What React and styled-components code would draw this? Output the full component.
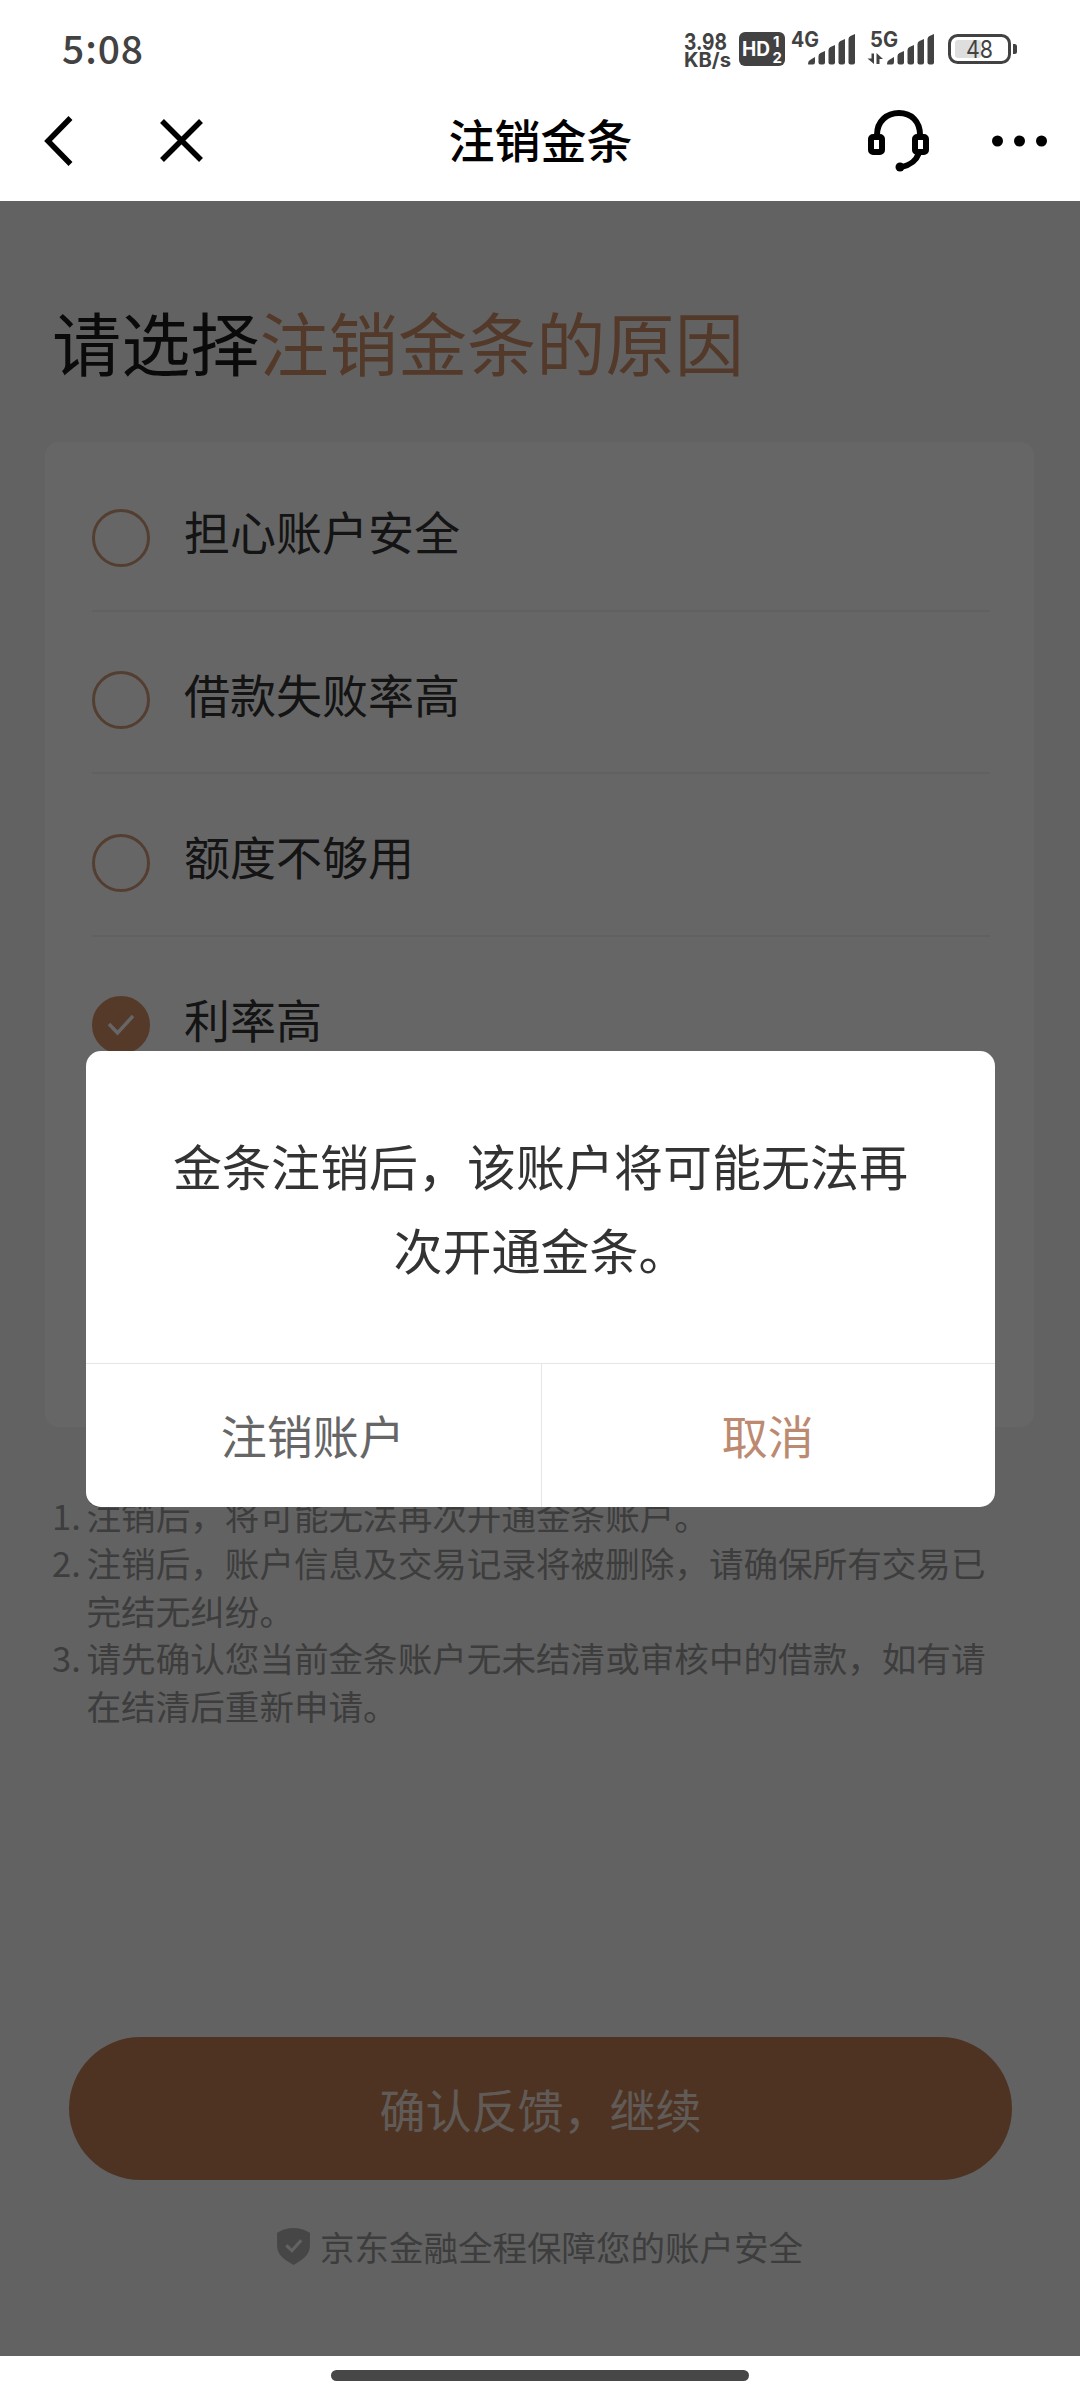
import React from "react";
import styled, { createGlobalStyle } from "styled-components";

const Global = createGlobalStyle`
  * { box-sizing: border-box; }
  html, body { margin: 0; padding: 0; background: #fff; }
  body { font-family: "Noto Sans CJK SC", sans-serif; }
  button { font-family: inherit; border: 0; background: none; padding: 0; margin: 0; }
`;

const Screen = styled.div`
  position: relative;
  width: 1080px;
  height: 2400px;
  display: flex;
  flex-direction: column;
  background: #fff;
  overflow: hidden;
`;

const StatusBar = styled.div`
  height: 80px;
  padding: 18px 63px 0 62px;
  display: flex;
  justify-content: space-between;
  align-items: flex-start;
  color: #424242;
`;

const Clock = styled.div`
  font-size: 39px;
  line-height: 58px;
  font-weight: 500;
  letter-spacing: 0.9px;
`;

const StatusIcons = styled.div`
  display: flex;
  align-items: flex-start;
  padding-top: 13px;
`;

const StatusGlyph = styled.svg`
  display: block;
  overflow: visible;
  margin-right: ${(p) => p.$gap || 0}px;
`;

const NavBar = styled.div`
  height: 121px;
  padding: 0 32px 0 38px;
  display: grid;
  grid-template-columns: 1fr auto 1fr;
  align-items: center;
`;

const NavGroup = styled.div`
  display: flex;
  align-items: center;
  gap: ${(p) => p.$gap}px;
  justify-content: ${(p) => p.$align};
`;

const NavTitle = styled.div`
  padding: 0 5px 6px 0;
  font-size: 46px;
  line-height: 60px;
  font-weight: 500;
  color: #000;
`;

const Body = styled.main`
  position: relative;
  height: 2155px;
  background: #f6f6f6;
  display: flex;
  flex-direction: column;
`;

const Heading = styled.h1`
  margin: 0;
  padding: 90px 0 0 52px;
  height: 241px;
  font-size: 69.2px;
  line-height: 100px;
  font-weight: 400;
  color: #1a1a1a;
  white-space: nowrap;
`;

const Accent = styled.span`
  color: #d0906a;
`;

const Card = styled.section`
  margin: 0 46px 0 45px;
  height: 985px;
  padding: 7px 44px 0 47px;
  border-radius: 14px;
  background: #fff;
`;

const Option = styled.div`
  height: 162.5px;
  display: flex;
  align-items: center;
  border-bottom: 2px solid #f3f3f3;
`;

const Radio = styled.span`
  width: 58px;
  height: 58px;
  margin: 17px 34px 0 0;
  display: flex;
  align-items: center;
  justify-content: center;
  border-radius: 50%;
  border: 3px solid ${(p) => (p.$checked ? "#d59068" : "#cf9c7a")};
  background: ${(p) => (p.$checked ? "#d59068" : "transparent")};
`;

const OptionLabel = styled.span`
  padding-top: 2px;
  font-size: 46px;
  line-height: 68px;
  color: #333;
`;

const Notes = styled.ol`
  list-style: none;
  margin: 0;
  padding: 65px 90px 0 52px;
  font-size: 34.6px;
  line-height: 47.4px;
  color: #999;
`;

const Note = styled.li`
  display: flex;
`;

const NoteIndex = styled.span`
  width: 34.5px;
  flex: none;
`;

const NoteText = styled.span`
  width: 910px;
  white-space: pre;
`;

const Footer = styled.div`
  margin-top: auto;
  height: 319px;
  padding: 0 68px 0 69px;
`;

const Confirm = styled.button`
  display: block;
  width: 100%;
  height: 143px;
  padding-bottom: 1px;
  border-radius: 72px;
  background: #c38058;
  color: rgba(255, 255, 255, 0.8);
  font-size: 46px;
  line-height: 68px;
`;

const Guard = styled.div`
  margin-top: 40px;
  padding-right: 1px;
  display: flex;
  align-items: center;
  justify-content: center;
  gap: 10px;
  font-size: 34.5px;
  line-height: 52px;
  color: #999;
`;

const Mask = styled.div`
  position: absolute;
  inset: 0;
  background: rgba(0, 0, 0, 0.6);
`;

const Dialog = styled.div`
  position: absolute;
  left: 86px;
  top: 850px;
  width: 909px;
  height: 456px;
  display: flex;
  flex-direction: column;
  border-radius: 15px;
  background: #fff;
  overflow: hidden;
`;

const Message = styled.p`
  margin: 0;
  height: 312px;
  padding-top: 72px;
  text-align: center;
  font-size: 49px;
  line-height: 84px;
  color: #333;
`;

const Actions = styled.div`
  flex: 1;
  display: grid;
  grid-template-columns: 1fr 1fr;
  border-top: 1px solid #e6e6e6;
`;

const Action = styled.button`
  padding: 0 1px 3px 0;
  font-size: 46px;
  line-height: 68px;
  color: ${(p) => (p.$primary ? "#bc8a70" : "#666")};
  border-left: ${(p) => (p.$primary ? "1px solid #e6e6e6" : "0")};
`;

const HomeArea = styled.div`
  height: 44px;
  padding-top: 14px;
  display: flex;
  justify-content: center;
`;

const HomeBar = styled.div`
  width: 418px;
  height: 11px;
  border-radius: 6px;
  background: #474747;
`;

const SmallText = styled.text`
  font-family: Inter, sans-serif;
  font-weight: ${(p) => p.$weight || 700};
  font-size: ${(p) => p.$size}px;
  fill: ${(p) => p.$color || "#424242"};
`;

const Signal = ({ label, arrows, gap }) => (
  <StatusGlyph width="70" height="36" viewBox="0 0 70 36" $gap={gap}>
    <SmallText x="0" y="16.3" $size={21} textLength="28" lengthAdjust="spacingAndGlyphs">{label}</SmallText>
    <g fill="#424242">
      <path d="M17 33 Q17 30 19 29 L24 26 V31 Q24 33.500 22 33.500 H18 Q17 33.500 17 33Z" />
      <path d="M27.500 25 Q27.500 23 29.500 22 L34 20 V31.500 Q34 33.500 32 33.500 H29.500 Q27.500 33.500 27.500 31.500Z" />
      <path d="M37.500 19 Q37.500 17 39.500 16 L44 14 V31.500 Q44 33.500 42 33.500 H39.500 Q37.500 33.500 37.500 31.500Z" />
      <path d="M47.500 13 Q47.500 11 49.500 10 L54 8 V31.500 Q54 33.500 52 33.500 H49.500 Q47.500 33.500 47.500 31.500Z" />
      <path d="M57.500 8 Q57.500 6 59.500 5 L64 3 V31.500 Q64 33.500 62 33.500 H59.500 Q57.500 33.500 57.500 31.500Z" />
      {arrows && <path d="M1.500 22.500 H4 V33 L-2.500 27.500 H1.500Z M6.500 33 V22 L13 28 H9.500 V33Z" />}
    </g>
  </StatusGlyph>
);

const options = [
  { text: "担心账户安全" },
  { text: "借款失败率高" },
  { text: "额度不够用" },
  { text: "利率高", checked: true },
];

const notes = [
  "注销后，将可能无法再次开通金条账户。",
  "注销后，账户信息及交易记录将被删除，请确保所有交易已\n完结无纠纷。",
  "请先确认您当前金条账户无未结清或审核中的借款，如有请\n在结清后重新申请。",
];

export default function App() {
  return (
    <Screen>
      <Global />
      <StatusBar>
        <Clock>5:08</Clock>
        <StatusIcons>
          <StatusGlyph width="48" height="38" viewBox="0 0 48 38" $gap={7}>
            <SmallText x="0" y="18.700" $size={23} textLength="43" lengthAdjust="spacingAndGlyphs">3.98</SmallText>
            <SmallText x="0" y="36" $size={19.5} textLength="47" lengthAdjust="spacingAndGlyphs">KB/s</SmallText>
          </StatusGlyph>
          <StatusGlyph width="46" height="36" viewBox="0 0 46 36" $gap={6}>
            <rect x="0" y="1" width="46" height="34" rx="6" fill="#424242" />
            <SmallText x="3" y="25" $size={19.5} $color="#fff" textLength="28" lengthAdjust="spacingAndGlyphs">HD</SmallText>
            <SmallText x="34" y="16" $size={15} $color="#fff">1</SmallText>
            <SmallText x="33.500" y="31.500" $size={15} $color="#fff">2</SmallText>
          </StatusGlyph>
          <Signal label="4G" gap={9} />
          <Signal label="5G" arrows gap={8} />
          <StatusGlyph width="69" height="36" viewBox="0 0 69 36">
            <rect x="1.500" y="4.500" width="60" height="27" rx="8" fill="none" stroke="#424242" strokeWidth="3" />
            <rect x="7" y="9" width="26" height="18" rx="3" fill="#dedede" />
            <path d="M65 13 h1.500 q2.500 0 2.500 2.500 v5 q0 2.500 -2.500 2.500 h-1.500z" fill="#424242" />
            <SmallText x="18" y="27" $size={24} $weight={400} textLength="27" lengthAdjust="spacingAndGlyphs">48</SmallText>
          </StatusGlyph>
        </StatusIcons>
      </StatusBar>

      <NavBar>
        <NavGroup $gap={81} $align="flex-start">
          <svg width="40" height="60" viewBox="0 0 40 60" fill="none" stroke="#000" strokeWidth="5.500">
            <path d="M32.500 7 L10 30 L32.500 53" />
          </svg>
          <svg width="46" height="46" viewBox="0 0 46 46" fill="none" stroke="#000" strokeWidth="5.500">
            <path d="M3 3 L42 42 M42 3 L3 42" />
          </svg>
        </NavGroup>
        <NavTitle>注销金条</NavTitle>
        <NavGroup $gap={61} $align="flex-end">
          <svg width="62" height="62" viewBox="0 0 62 62" fill="none" stroke="#000" strokeWidth="6">
            <path d="M9 25 C9 11 19 3 31 3 C43 3 52 11 52 25" />
            <rect x="3" y="27" width="11" height="15" rx="2" />
            <rect x="47" y="27" width="11" height="15" rx="2" />
            <path d="M51 43 C48 51 43 55 33 57" />
            <circle cx="32" cy="57" r="4.500" fill="#000" stroke="none" />
          </svg>
          <svg width="57" height="12" viewBox="0 0 57 12">
            <circle cx="6.500" cy="6" r="5.500" />
            <circle cx="28.500" cy="6" r="5.500" />
            <circle cx="50.500" cy="6" r="5.500" />
          </svg>
        </NavGroup>
      </NavBar>

      <Body>
        <Heading>请选择<Accent>注销金条的原因</Accent></Heading>
        <Card>
          {options.map((o) => (
            <Option key={o.text}>
              <Radio $checked={o.checked}>
                {o.checked && (
                  <svg width="30" height="24" viewBox="0 0 30 24" fill="none" stroke="#fff" strokeWidth="3.500">
                    <path d="M3 11 L11.500 20 L27 3" />
                  </svg>
                )}
              </Radio>
              <OptionLabel>{o.text}</OptionLabel>
            </Option>
          ))}
        </Card>
        <Notes>
          {notes.map((n, i) => (
            <Note key={n}>
              <NoteIndex>{i + 1}.</NoteIndex>
              <NoteText>{n}</NoteText>
            </Note>
          ))}
        </Notes>
        <Footer>
          <Confirm>确认反馈，继续</Confirm>
          <Guard>
            <svg width="33" height="37" viewBox="0 0 32 36">
              <path d="M16 0 C22 0 27 2 32 4.500 V17 C32 26 25 31 16 36 C7 31 0 26 0 17 V4.500 C5 2 10 0 16 0Z" fill="#b0b0b0" />
              <path d="M9 17 L14.500 22 L23.500 12" fill="none" stroke="#f6f6f6" strokeWidth="3" />
            </svg>
            <span>京东金融全程保障您的账户安全</span>
          </Guard>
        </Footer>
        <Mask />
        <Dialog role="dialog">
          <Message>金条注销后，该账户将可能无法再<br />次开通金条。</Message>
          <Actions>
            <Action>注销账户</Action>
            <Action $primary>取消</Action>
          </Actions>
        </Dialog>
      </Body>
      <HomeArea><HomeBar /></HomeArea>
    </Screen>
  );
}
